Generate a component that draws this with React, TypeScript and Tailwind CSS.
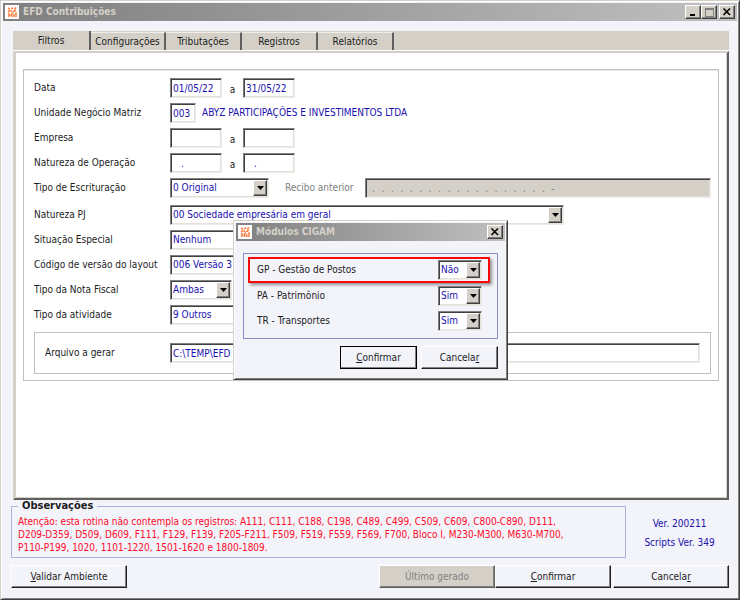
import type { ReactNode } from "react"
import { useId } from "react"

const sunken =
  "rounded-none border border-t-[#808080] border-r-[#eeece6] border-b-[#eeece6] border-l-[#808080] shadow-[inset_1px_1px_0_#404040,inset_-1px_-1px_0_#e4e1da]"
const raised =
  "border border-t-white border-r-[#404040] border-b-[#404040] border-l-white bg-[#d4d0c8] shadow-[inset_-1px_-1px_0_#808080]"

const tabs = [
  { label: "Configurações", className: "w-[75px]" },
  { label: "Tributações", className: "w-[76px]" },
  { label: "Registros", className: "w-[76px]" },
  { label: "Relatórios", className: "w-[76px]" },
]

const modules = [
  { label: "GP - Gestão de Postos", value: "Não", highlighted: true },
  { label: "PA - Patrimônio", value: "Sim", highlighted: false },
  { label: "TR - Transportes", value: "Sim", highlighted: false },
]

function Logo() {
  return (
    <svg viewBox="0 0 14 14" className="size-3.5 shrink-0" aria-hidden="true">
      <rect width="14" height="14" fill="#fff" />
      <g stroke="#ff7a3c" strokeWidth="1.5" fill="none">
        <path d="M3 2.800l1.800 1.700M6.300 4.300L8 2.500M9.200 4.300L11 2.500M3 6.800l2-1.600M5.500 5.500l2 1.800M8.300 6.800l2.500-2" />
        <path d="M3 8.200l1.800 1.200M3 11.600l2.300-2M6.600 12V9.300l1.600-1.600M8.900 12V9.300M11 12V7.300" />
      </g>
    </svg>
  )
}

function TitleBar({ title, children }: { title: string; children: ReactNode }) {
  return (
    <header className="flex h-[18px] items-center gap-1 bg-linear-to-r from-[#808080] to-[#c0c0c0] px-0.5">
      <Logo />
      <h1 className="flex-1 font-bold text-[#d4d0c8]">{title}</h1>
      <div className="flex">{children}</div>
    </header>
  )
}

function WindowButton({
  label,
  className = "",
  children,
}: {
  label: string
  className?: string
  children: ReactNode
}) {
  return (
    <button
      type="button"
      aria-label={label}
      className={`flex h-3.5 w-4 items-center justify-center ${raised} ${className}`}
    >
      <svg viewBox="0 0 10 10" className="size-2.5" fill="none" shapeRendering="crispEdges">
        {children}
      </svg>
    </button>
  )
}

function CloseButton({ className }: { className?: string }) {
  return (
    <WindowButton label="Fechar" className={className}>
      <path
        d="M1.500 1.500l6.500 6.500M8 1.500l-6.500 6.500"
        stroke="#000"
        strokeWidth="1.600"
        shapeRendering="auto"
      />
    </WindowButton>
  )
}

function Select({
  id,
  value,
  className,
}: {
  id: string
  value: string
  className: string
}) {
  return (
    <div className={`relative h-5 ${className}`}>
      <select
        id={id}
        defaultValue={value}
        className={`h-full w-full appearance-none bg-white pl-0.5 text-[#1a10b0] ${sunken}`}
      >
        <option>{value}</option>
      </select>
      <span
        className={`pointer-events-none absolute inset-y-0.5 right-0.5 flex w-3.5 items-center justify-center ${raised}`}
      >
        <svg viewBox="0 0 7 4" className="h-1 w-[7px]" aria-hidden="true">
          <path d="M0 0h7L3.500 4z" />
        </svg>
      </span>
    </div>
  )
}

function TextField({
  id,
  label,
  value = "",
  className,
}: {
  id?: string
  label?: string
  value?: string
  className: string
}) {
  return (
    <input
      id={id}
      aria-label={label}
      type="text"
      defaultValue={value}
      className={`h-5 bg-white px-0.5 text-[#1a10b0] ${sunken} ${className}`}
    />
  )
}

function Row({
  label,
  children,
}: {
  label: string
  children: (id: string) => ReactNode
}) {
  const id = useId()

  return (
    <div className="flex h-5 items-center">
      <label htmlFor={id} className="w-34 shrink-0">
        {label}
      </label>
      {children(id)}
    </div>
  )
}

function RangeRow({
  label,
  from,
  to,
  fieldClassName = "",
}: {
  label: string
  from?: string
  to?: string
  fieldClassName?: string
}) {
  return (
    <Row label={label}>
      {(id) => (
        <>
          <TextField id={id} value={from} className={`w-13 ${fieldClassName}`} />
          <span className="w-[21px] pt-1 text-center">a</span>
          <TextField
            label={`${label} final`}
            value={to}
            className={`w-13 ${fieldClassName}`}
          />
        </>
      )}
    </Row>
  )
}

function Button({
  children,
  className = "",
  disabled = false,
}: {
  children: ReactNode
  className?: string
  disabled?: boolean
}) {
  return (
    <button
      type="button"
      disabled={disabled}
      className={`h-[23px] border border-t-white border-r-[#202020] border-b-[#202020] border-l-white bg-[#f3f3fa] shadow-[inset_-1px_-1px_0_#808080] disabled:border-r-[#606060] disabled:border-b-[#606060] disabled:bg-[#d4d0c8] disabled:text-[#808080] ${className}`}
    >
      {children}
    </button>
  )
}

function FiltersForm() {
  return (
    <div className="border border-[#c0c0c0] pt-2 pr-[7px] pb-1.5 pl-2.5 shadow-[inset_0_1px_0_#e8e8e8]">
      <div className="flex flex-col gap-[5px]">
        <RangeRow label="Data" from="01/05/22" to="31/05/22" />
        <Row label="Unidade Negócio Matriz">
          {(id) => (
            <>
              <TextField id={id} value="003" className="w-[26px]" />
              <span className="pl-1.5 text-[#1a10b0]">
                ABYZ PARTICIPAÇÕES E INVESTIMENTOS LTDA
              </span>
            </>
          )}
        </Row>
        <RangeRow label="Empresa" />
        <RangeRow
          label="Natureza de Operação"
          from="."
          to="."
          fieldClassName="pl-2.5"
        />
        <Row label="Tipo de Escrituração">
          {(id) => (
            <>
              <Select id={id} value="0 Original" className="w-[99px]" />
              <label
                htmlFor="recibo"
                className="w-24 shrink-0 pl-4 text-[#808080]"
              >
                Recibo anterior
              </label>
              <input
                id="recibo"
                type="text"
                disabled
                defaultValue=".  .  .  .  .  .  .  .  .  .  .  .  .  .  .  .  .  .  .  -"
                className={`h-5 min-w-0 flex-1 bg-[#d4d0c8] pl-1.5 text-[11px] text-[#808080] ${sunken}`}
              />
            </>
          )}
        </Row>
      </div>
      <div className="mt-[7px] flex flex-col gap-[5px]">
        <Row label="Natureza PJ">
          {(id) => (
            <Select
              id={id}
              value="00 Sociedade empresária em geral"
              className="w-[394px]"
            />
          )}
        </Row>
        <Row label="Situação Especial">
          {(id) => <Select id={id} value="Nenhum" className="w-[180px]" />}
        </Row>
        <Row label="Código de versão do layout">
          {(id) => (
            <Select id={id} value="006 Versão 3" className="w-[180px]" />
          )}
        </Row>
        <Row label="Tipo da Nota Fiscal">
          {(id) => <Select id={id} value="Ambas" className="w-[62px]" />}
        </Row>
        <Row label="Tipo da atividade">
          {(id) => <Select id={id} value="9 Outros" className="w-[180px]" />}
        </Row>
      </div>
      <div className="mt-[7px] flex items-center border border-[#c0c0c0] p-2.5">
        <label htmlFor="arquivo" className="w-[125px] shrink-0">
          Arquivo a gerar
        </label>
        <TextField id="arquivo" value="C:\TEMP\EFD" className="min-w-0 flex-1" />
      </div>
    </div>
  )
}

function ModulesDialog() {
  return (
    <section
      role="dialog"
      aria-label="Módulos CIGAM"
      className="absolute top-[219px] left-[232px] w-[275px] border border-t-[#d4d0c8] border-r-[#404040] border-b-[#404040] border-l-[#d4d0c8] bg-[#f3f3fa] p-0.5 shadow-[inset_1px_1px_0_#fff,inset_-1px_-1px_0_#808080]"
    >
      <TitleBar title="Módulos CIGAM">
        <CloseButton />
      </TitleBar>
      <div className="px-[7px] pt-3 pb-2">
        <div className="flex flex-col border border-[#8c8cd0] px-1 pt-[3px] pb-[5px]">
          {modules.map((module) => (
            <div
              key={module.label}
              className={
                module.highlighted
                  ? "mr-[3px] flex h-[26px] items-center border-2 border-[#f80808] pr-1.5 pl-[7px] shadow-[2px_2px_3px_#00000066]"
                  : "flex h-[25px] items-center pr-[11px] pl-[9px]"
              }
            >
              <label htmlFor={module.label} className="flex-1">
                {module.label}
              </label>
              <Select
                id={module.label}
                value={module.value}
                className="w-11"
              />
            </div>
          ))}
        </div>
        <div className="mt-[7px] flex justify-end gap-1">
          <Button className="w-[77px] outline outline-black -outline-offset-1">
            <u>C</u>onfirmar
          </Button>
          <Button className="w-[77px]">
            Cancela<u>r</u>
          </Button>
        </div>
      </div>
    </section>
  )
}

export default function App() {
  return (
    <main className="relative flex min-h-screen flex-col border border-t-[#d4d0c8] border-r-[#404040] border-b-[#404040] border-l-[#d4d0c8] bg-[#f3f3fa] p-0.5 font-['DejaVu_Sans_Condensed','DejaVu_Sans',sans-serif] text-[10px] leading-3 text-[#1c1c1c] shadow-[inset_1px_1px_0_#fff,inset_-1px_-1px_0_#808080]">
      <TitleBar title="EFD Contribuições">
        <WindowButton label="Minimizar">
          <path d="M2 8h5" stroke="#000" strokeWidth="2" />
        </WindowButton>
        <WindowButton label="Maximizar">
          <path d="M1 1h8v8H1zM1 2h8" stroke="#808080" />
        </WindowButton>
        <CloseButton className="ml-0.5" />
      </TitleBar>

      <div className="flex flex-1 flex-col px-2 pt-2.5 pb-[9px]">
        <div className="ml-0.5 flex flex-1 flex-col">
          <div
            role="tablist"
            className="flex h-5 items-end border-b border-b-white bg-[#d4d0c8]"
          >
            <button
              type="button"
              role="tab"
              aria-selected="true"
              className="h-full w-[78px] border-r-2 border-r-[#606060]"
            >
              Filtros
            </button>
            {tabs.map((tab) => (
              <button
                key={tab.label}
                type="button"
                role="tab"
                aria-selected="false"
                className={`h-[18px] border-t border-r-2 border-t-[#f0eee8] border-r-[#606060] ${tab.className}`}
              >
                {tab.label}
              </button>
            ))}
          </div>
          <div className="flex-1 border-2 border-t-[#d4d0c8] border-r-[#606060] border-b-[#606060] border-l-[#d4d0c8] bg-white px-2 pt-4 shadow-[inset_1px_0_0_#d4d0c8,inset_-1px_-1px_0_#d4d0c8]">
            <FiltersForm />
          </div>
        </div>

        <div className="flex items-center">
          <fieldset className="min-w-0 flex-1 border border-[#b0b0e0] px-1.5 py-[3px]">
            <legend className="px-1 text-[11px] font-bold">Observações</legend>
            <p className="leading-[13px] text-[#ff0a28]">
              Atenção: esta rotina não contempla os registros: A111, C111, C188,
              C198, C489, C499, C509, C609, C800-C890, D111,
              <br />
              D209-D359, D509, D609, F111, F129, F139, F205-F211, F509, F519,
              F559, F569, F700, Bloco I, M230-M300, M630-M700,
              <br />
              P110-P199, 1020, 1101-1220, 1501-1620 e 1800-1809.
            </p>
          </fieldset>
          <div className="flex w-[103px] flex-col gap-[7px] pt-2 pl-1 text-center text-[#1a10b0]">
            <p>Ver. 200211</p>
            <p>Scripts Ver. 349</p>
          </div>
        </div>

        <div className="mt-[7px] flex">
          <Button className="w-29">
            <u>V</u>alidar Ambiente
          </Button>
          <Button className="ml-auto w-29" disabled>
            Último <u>g</u>erado
          </Button>
          <Button className="w-29">
            <u>C</u>onfirmar
          </Button>
          <Button className="ml-0.5 w-29">
            Cancela<u>r</u>
          </Button>
        </div>
      </div>

      <ModulesDialog />
    </main>
  )
}
